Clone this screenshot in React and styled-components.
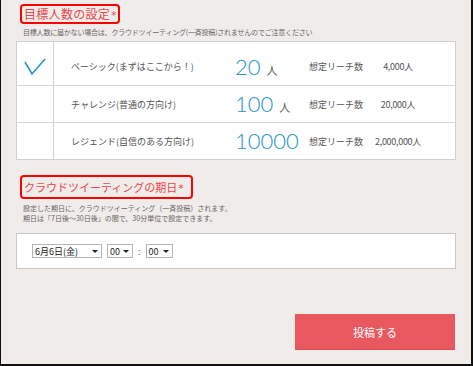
import React from "react";
import styled, { createGlobalStyle } from "styled-components";

const GlobalStyle = createGlobalStyle`
  html, body { margin: 0; padding: 0; }
  body {
    background: #ffffff;
    font-family: "Noto Sans CJK JP", "Noto Sans", sans-serif;
    color: #444;
  }
`;

const Frame = styled.div`
  box-sizing: border-box;
  width: 473px;
  height: 366px;
  background: #f0ece9;
  border-left: 1px solid #111;
  border-right: 2px solid #111;
  border-bottom: 2px solid #111;
  padding: 4px 15px 0 15px;
  display: flex;
  flex-direction: column;
`;

const Heading = styled.h2`
  align-self: flex-start;
  margin: ${(p) => p.$mt || 0}px 0 0 4px;
  box-sizing: border-box;
  height: ${(p) => p.$h}px;
  display: flex;
  align-items: center;
  padding: 0 ${(p) => p.$pr}px 0 2px;
  border: 2px solid #f00;
  border-radius: 4px;
  font-size: ${(p) => p.$fs}px;
  font-weight: normal;
  letter-spacing: ${(p) => p.$ls || 0}px;
  color: #e8474f;
  line-height: 1;
  white-space: nowrap;
`;

const Star = styled.span`
  font-family: "DejaVu Sans", sans-serif;
  font-size: 11px;
  margin-left: 1px;
  transform: translateY(1px);
`;

const Note = styled.p`
  margin: ${(p) => p.$mt || 0}px 0 0 7px;
  font-size: 7px;
  line-height: 10px;
  letter-spacing: ${(p) => p.$ls || 0}px;
  color: #666;
  white-space: nowrap;
`;

const Table = styled.div`
  margin-top: 4px;
  background: #fff;
  border: 1px solid #cfcfcf;
`;

const Row = styled.div`
  display: grid;
  grid-template-columns: 37px 181px 74px 58px 62px 1fr;
  align-items: center;
  box-sizing: border-box;
  height: ${(p) => (p.$first ? 43 : 37)}px;
  padding-top: ${(p) => (p.$first ? 6 : 0)}px;
  border-top: ${(p) => (p.$first ? "none" : "1px solid #d6d6d6")};
`;

const CheckCell = styled.div`
  align-self: stretch;
  margin-top: ${(p) => (p.$first ? -6 : 0)}px;
  border-right: 1px solid #d0d0d0;
  display: flex;
  align-items: center;
  justify-content: center;
  padding-top: ${(p) => (p.$first ? 6 : 0)}px;
`;

const Label = styled.div`
  padding-left: 17px;
  font-size: 9px;
  color: #555;
  white-space: nowrap;
`;

const Count = styled.div`
  display: flex;
  align-items: baseline;
  white-space: nowrap;
`;

const Num = styled.span`
  font-family: Lato, "Open Sans", sans-serif;
  font-weight: 300;
  font-size: 22px;
  line-height: 1;
  color: #2394cf;
`;

const Unit = styled.span`
  margin-left: 6px;
  font-size: 11px;
  color: #555;
`;

const ReachLabel = styled.div`
  font-size: 9px;
  color: #555;
  white-space: nowrap;
`;

const ReachValue = styled.div`
  font-size: 9px;
  color: #555;
  text-align: center;
  white-space: nowrap;
  letter-spacing: -0.3px;
`;

const DateBox = styled.div`
  margin-top: 10px;
  box-sizing: border-box;
  height: 36px;
  background: #fff;
  border: 1px solid #c8c8c8;
  display: flex;
  align-items: center;
  gap: 5px;
  padding-left: 15px;
`;

const Select = styled.div`
  box-sizing: border-box;
  height: 14px;
  width: ${(p) => p.$w}px;
  border: 1px solid #b5b5b5;
  background: #fff;
  display: flex;
  align-items: center;
  justify-content: space-between;
  padding: 0 3px 0 2px;
  font-size: 9px;
  color: #222;
  white-space: nowrap;
`;

const Arrow = styled.span`
  width: 0;
  height: 0;
  border-left: 3px solid transparent;
  border-right: 3px solid transparent;
  border-top: 3px solid #222;
`;

const Colon = styled.span`
  font-size: 9px;
  color: #666;
`;

const ButtonRow = styled.div`
  margin-top: 45px;
  display: flex;
  justify-content: flex-end;
  padding-right: 1px;
`;

const Button = styled.button`
  width: 160px;
  height: 36px;
  border: none;
  border-bottom: 1px solid #d94c53;
  background: #e8585e;
  color: #fff;
  font-family: "Noto Sans CJK JP", sans-serif;
  font-size: 11px;
  cursor: pointer;
`;

const Check = () => (
  <svg width="22" height="18" viewBox="0 0 22 18">
    <polyline
      points="1,4 8,16 21,1"
      fill="none"
      stroke="#2394cf"
      strokeWidth="1.6"
    />
  </svg>
);

const plans = [
  { label: "ベーシック(まずはここから！)", num: "20", unit: true, reach: "4,000人", checked: true },
  { label: "チャレンジ(普通の方向け)", num: "100", unit: true, reach: "20,000人" },
  { label: "レジェンド(自信のある方向け)", num: "10000", unit: false, reach: "2,000,000人" },
];

export default function App() {
  return (
    <>
      <GlobalStyle />
      <Frame>
        <Heading $h={20} $fs={12} $pr={1} $ls={0.3}>
          目標人数の設定<Star>*</Star>
        </Heading>
        <Note $mt={3} $ls={-0.2}>
          目標人数に届かない場合は、クラウドツイーティング(一斉投稿)されませんのでご注意ください
        </Note>
        <Table>
          {plans.map((p, i) => (
            <Row key={p.label} $first={i === 0}>
              <CheckCell $first={i === 0}>{p.checked && <Check />}</CheckCell>
              <Label>{p.label}</Label>
              <Count>
                <Num>{p.num}</Num>
                {p.unit && <Unit>人</Unit>}
              </Count>
              <ReachLabel>想定リーチ数</ReachLabel>
              <ReachValue>{p.reach}</ReachValue>
              <div />
            </Row>
          ))}
        </Table>
        <Heading $mt={15} $h={24} $fs={11} $pr={7}>
          クラウドツイーティングの期日<Star>*</Star>
        </Heading>
        <Note $mt={4}>設定した期日に、クラウドツイーティング（一斉投稿）されます。</Note>
        <Note>期日は「7日後〜30日後」の間で、30分単位で設定できます。</Note>
        <DateBox>
          <Select $w={70}>
            6月6日(金)<Arrow />
          </Select>
          <Select $w={26}>
            00<Arrow />
          </Select>
          <Colon>:</Colon>
          <Select $w={27}>
            00<Arrow />
          </Select>
        </DateBox>
        <ButtonRow>
          <Button>投稿する</Button>
        </ButtonRow>
      </Frame>
    </>
  );
}
